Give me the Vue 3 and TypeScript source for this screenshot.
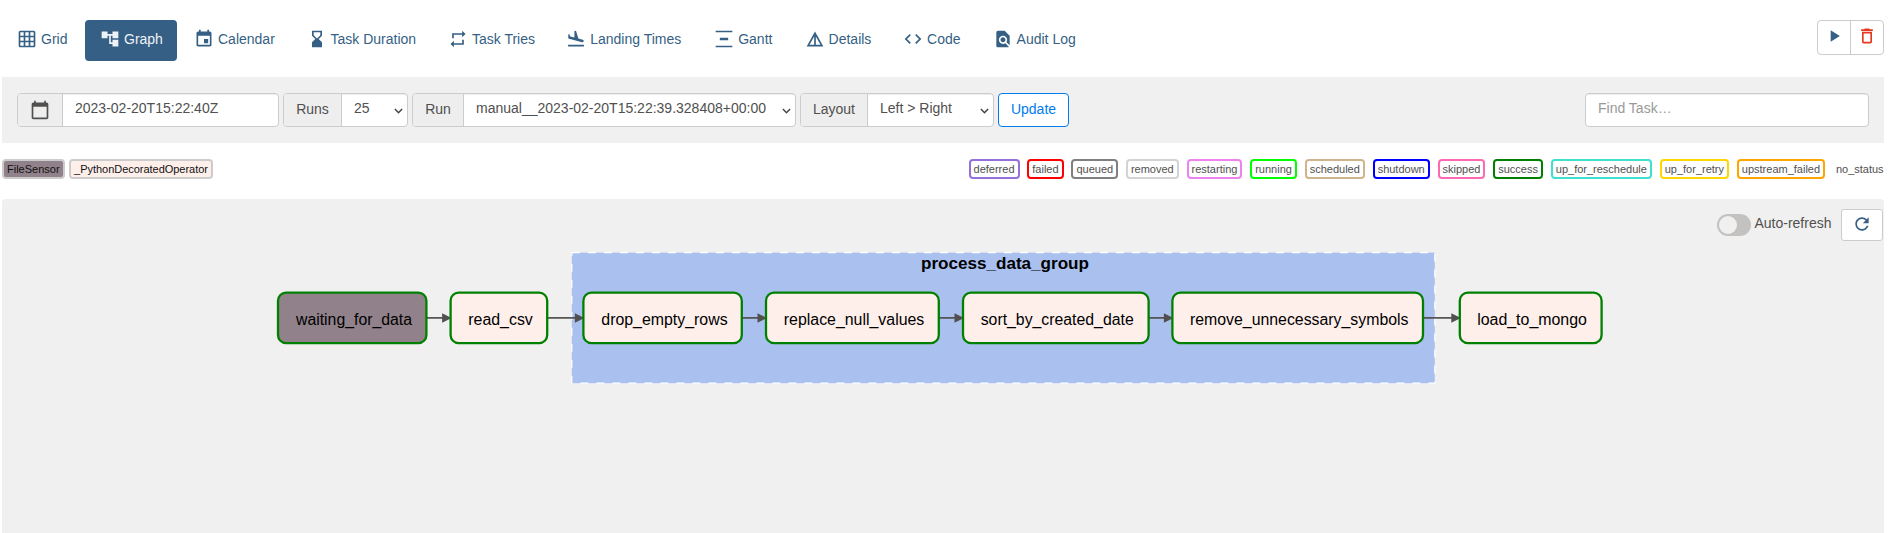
<script setup lang="ts">
interface Tab { name: string; width: number; icon: string; active?: boolean }
interface State { name: string; color: string }
interface TaskNode { name: string; x: number; w: number; tx: number; tw: number; sensor?: boolean }

const tabs: Tab[] = [
  { name: 'Grid', width: 81, icon: 'M20 2H4c-1.100 0-2 .9-2 2v16c0 1.100.9 2 2 2h16c1.100 0 2-.9 2-2V4c0-1.100-.9-2-2-2zM8 20H4v-4h4v4zm0-6H4v-4h4v4zm0-6H4V4h4v4zm6 12h-4v-4h4v4zm0-6h-4v-4h4v4zm0-6h-4V4h4v4zm6 12h-4v-4h4v4zm0-6h-4v-4h4v4zm0-6h-4V4h4v4z' },
  { name: 'Graph', width: 92, active: true, icon: 'M22 11V3h-7v3H9V3H2v8h7V8h2v10h4v3h7v-8h-7v3h-2V8h2v3z' },
  { name: 'Calendar', width: 110.5, icon: 'M17 12h-5v5h5v-5zM16 1v2H8V1H6v2H5c-1.110 0-1.990.9-1.990 2L3 19c0 1.100.89 2 2 2h14c1.100 0 2-.9 2-2V5c0-1.100-.9-2-2-2h-1V1h-2zm3 18H5V8h14v11z' },
  { name: 'Task Duration', width: 139.5, icon: 'M18 22l-.01-6L14 12l3.990-4.010L18 2H6v6l4 4-4 3.990V22h12zM8 7.500V4h8v3.500l-4 4-4-4z' },
  { name: 'Task Tries', width: 116.2, icon: 'M7 7h10v3l4-4-4-4v3H5v6h2V7zm10 10H7v-3l-4 4 4 4v-3h12v-6h-2v4z' },
  { name: 'Landing Times', width: 146, icon: 'M2.500 19h19v2h-19v-2zm16.840-3.150c.8.21 1.620-.26 1.840-1.060.21-.8-.26-1.620-1.060-1.840l-5.310-1.420-2.760-9.020L10.120 2v8.280L5.150 8.950l-.93-2.320-1.450-.39v5.170l16.570 4.440z' },
  { name: 'Gantt', width: 88.4, icon: 'M22 2v2H2V2h20zM7 10.500v3h10v-3H7zM2 20v2h20v-2H2z' },
  { name: 'Details', width: 96.5, icon: 'M12 3L2 21h20L12 3zm1 5.920L18.600 19H13V8.920zm-2 0V19H5.400L11 8.920z' },
  { name: 'Code', width: 87.5, icon: 'M9.400 16.600L4.800 12l4.600-4.600L8 6l-6 6 6 6 1.400-1.400zm5.200 0l4.600-4.600-4.600-4.600L16 6l6 6-6 6-1.400-1.400z' },
  { name: 'Audit Log', width: 112, icon: 'M14 2H6c-1.100 0-1.990.9-1.990 2L4 20c0 1.100.89 2 1.990 2H18c.45 0 .85-.15 1.190-.4l-4.430-4.430c-.8.520-1.740.83-2.760.83-2.760 0-5-2.240-5-5s2.240-5 5-5 5 2.240 5 5c0 1.020-.31 1.960-.83 2.750L20 19.580V8l-6-6zM9 13c0 1.660 1.340 3 3 3s3-1.340 3-3-1.340-3-3-3-3 1.340-3 3z' },
]

const states: State[] = [
  { name: 'deferred', color: 'mediumpurple' },
  { name: 'failed', color: 'red' },
  { name: 'queued', color: 'gray' },
  { name: 'removed', color: 'lightgrey' },
  { name: 'restarting', color: 'violet' },
  { name: 'running', color: 'lime' },
  { name: 'scheduled', color: 'tan' },
  { name: 'shutdown', color: 'blue' },
  { name: 'skipped', color: 'hotpink' },
  { name: 'success', color: 'green' },
  { name: 'up_for_reschedule', color: 'turquoise' },
  { name: 'up_for_retry', color: 'gold' },
  { name: 'upstream_failed', color: 'orange' },
]

const nodes: TaskNode[] = [
  { name: 'waiting_for_data', x: 276, w: 148.4, tx: 294, tw: 116, sensor: true },
  { name: 'read_csv', x: 448.6, w: 96.6, tx: 466.3, tw: 64.5 },
  { name: 'drop_empty_rows', x: 581.4, w: 158.4, tx: 599.3, tw: 126.3 },
  { name: 'replace_null_values', x: 764, w: 172.8, tx: 781.8, tw: 140.5 },
  { name: 'sort_by_created_date', x: 961, w: 185.6, tx: 978.7, tw: 153 },
  { name: 'remove_unnecessary_symbols', x: 1170.4, w: 250.6, tx: 1188, tw: 218.5 },
  { name: 'load_to_mongo', x: 1457.8, w: 141.8, tx: 1475.2, tw: 109.7 },
]
const edges = nodes.slice(1).map((n, i) => ({ from: nodes[i].x + nodes[i].w, to: n.x }))
</script>

<template>
  <div class="page">
    <header class="nav">
      <nav class="tabs">
        <a v-for="t in tabs" :key="t.name" class="tab" :class="{ active: t.active }" :style="{ width: t.width + 'px' }">
          <svg class="icon" viewBox="0 0 24 24"><path :d="t.icon" /></svg>
          <span>{{ t.name }}</span>
        </a>
      </nav>
      <div class="actions">
        <button class="act">
          <svg class="icon" viewBox="0 0 24 24"><path d="M8 5v14l11-7z" /></svg>
        </button>
        <button class="act danger">
          <svg class="icon" viewBox="0 0 24 24"><path d="M6 19c0 1.100.9 2 2 2h8c1.100 0 2-.9 2-2V7H6v12zM8 9h8v10H8V9zm7.500-5l-1-1h-5l-1 1H5v2h14V4z" /></svg>
        </button>
      </div>
    </header>

    <section class="filters">
      <div class="group date">
        <span class="addon">
          <svg class="icon" viewBox="0 0 24 24"><path d="M20 3h-1V1h-2v2H7V1H5v2H4c-1.100 0-2 .9-2 2v16c0 1.100.9 2 2 2h16c1.100 0 2-.9 2-2V5c0-1.100-.9-2-2-2zm0 18H4V8h16v13z" /></svg>
        </span>
        <span class="field">2023-02-20T15:22:40Z</span>
      </div>
      <div class="group runs">
        <span class="addon">Runs</span>
        <span class="field select">25<svg class="chev" viewBox="0 0 10 7"><path d="M1 1.200l4 4 4-4" /></svg></span>
      </div>
      <div class="group run">
        <span class="addon">Run</span>
        <span class="field select">manual__2023-02-20T15:22:39.328408+00:00<svg class="chev" viewBox="0 0 10 7"><path d="M1 1.200l4 4 4-4" /></svg></span>
      </div>
      <div class="group layout">
        <span class="addon">Layout</span>
        <span class="field select">Left &gt; Right<svg class="chev" viewBox="0 0 10 7"><path d="M1 1.200l4 4 4-4" /></svg></span>
      </div>
      <button class="update">Update</button>
      <div class="group search"><span class="field hint">Find Task…</span></div>
    </section>

    <section class="legend">
      <div class="operators">
        <span class="chip op sensor">FileSensor</span>
        <span class="chip op decorated">_PythonDecoratedOperator</span>
      </div>
      <div class="states">
        <span v-for="s in states" :key="s.name" class="chip" :style="{ borderColor: s.color }">{{ s.name }}</span>
        <span class="chip bare">no_status</span>
      </div>
    </section>

    <section class="panel">
      <div class="refresh">
        <span class="switch"></span>
        <span class="label">Auto-refresh</span>
        <button class="reload">
          <svg class="icon" viewBox="0 0 24 24"><path d="M17.650 6.350C16.200 4.900 14.210 4 12 4c-4.420 0-7.990 3.580-7.990 8s3.570 8 7.990 8c3.730 0 6.840-2.550 7.730-6h-2.080c-.82 2.330-3.040 4-5.650 4-3.310 0-6-2.690-6-6s2.690-6 6-6c1.660 0 3.140.69 4.220 1.780L13 11h7V4l-2.350 2.350z" /></svg>
        </button>
      </div>
      <svg class="graph" viewBox="0 0 1882 292" width="1882" height="292">
        <rect class="cluster" x="569.800" y="11.600" width="863" height="130.600" />
        <text class="title" x="919" y="28" textLength="168" lengthAdjust="spacingAndGlyphs">process_data_group</text>
        <g v-for="(e, i) in edges" :key="i" class="edge">
          <line :x1="e.from" y1="76.900" :x2="e.to - 7" y2="76.900" />
          <path :d="`M${e.to - 8.500} 72.200v9.600l9.500 -4.800z`" />
        </g>
        <g v-for="n in nodes" :key="n.name">
          <rect class="node" :class="{ sensor: n.sensor }" :x="n.x" y="51.700" :width="n.w" height="50.400" rx="8" />
          <text class="name" :x="n.tx" y="84" :textLength="n.tw" lengthAdjust="spacingAndGlyphs">{{ n.name }}</text>
        </g>
      </svg>
    </section>
  </div>
</template>

<style>
body { margin: 0; background: #fff; overflow: hidden; }
</style>

<style scoped>
.page { box-sizing: border-box; width: 1890px; height: 533px; padding: 20px 6px 0 2px; display: flex; flex-direction: column; overflow: hidden; font: 14px/20px "Liberation Sans", Arial, sans-serif; color: #51504f; }
.page * { box-sizing: border-box; }
button { font: inherit; margin: 0; }
.icon { width: 20px; height: 20px; fill: currentColor; flex: none; }
.nav { display: flex; justify-content: space-between; align-items: flex-start; height: 57px; flex: none; }
.tabs { display: flex; gap: 2px; }
.tab { display: flex; align-items: center; gap: 4px; height: 41px; padding-left: 15px; border-radius: 4px; color: #355f84; white-space: nowrap; }
.tab .icon { position: relative; top: -1.500px; }
.tab span { margin-top: -3px; }
.active { background: #355f84; color: #edf2f7; }
.actions { display: flex; height: 35px; width: 67px; border: 1px solid #ccc; border-radius: 4px; }
.act { flex: 1; padding: 0 0 3px; border: 0; background: none; color: #355f84; display: flex; align-items: center; justify-content: center; }
.danger { border-left: 1px solid #ccc; color: #e43921; }
.filters { display: flex; align-items: center; gap: 4px; height: 66px; flex: none; padding: 0 15px; background: #f0f0f0; }
.group { display: flex; height: 34px; border: 1px solid #ccc; border-radius: 4px; background: #fff; overflow: hidden; white-space: nowrap; }
.addon { display: flex; align-items: center; justify-content: center; background: #eee; border-right: 1px solid #ccc; flex: none; padding-bottom: 3px; }
.addon .icon { position: relative; top: 1px; }
.field { position: relative; flex: 1; padding: 4px 12px; box-shadow: inset 0 1px 1px rgba(0, 0, 0, .075); }
.chev { position: absolute; right: 4.500px; top: 13.500px; width: 9px; height: 6.300px; fill: none; stroke: #444; stroke-width: 1.700; }
.date { width: 262px; }
.date .addon { width: 45px; }
.runs { width: 125px; }
.runs .addon { width: 58px; }
.run { width: 384px; }
.run .addon { width: 51px; }
.layout { width: 194px; }
.layout .addon { width: 67px; }
.update { width: 71px; height: 34px; padding: 0 0 3px; border: 1px solid #017cee; border-radius: 4px; background: #fff; color: #017cee; }
.search { width: 284px; margin-left: auto; }
.hint { color: #999; }
.legend { display: flex; justify-content: space-between; height: 56px; flex: none; padding-top: 16px; font-size: 11px; line-height: 16px; }
.operators { display: flex; gap: 4.500px; }
.states { display: flex; gap: 7.800px; margin-right: -2.600px; }
.chip { height: 20px; padding: 0 3px; border: 2px solid #ccc; border-radius: 4px; white-space: nowrap; }
.bare { border: 0; padding: 2px 3px; }
.op { background: #ffefeb; color: #111; }
.op.sensor { background: #91818a; }
.decorated { width: 143.500px; letter-spacing: -0.030px; }
.panel { flex: 1; min-height: 0; background: #f0f0f0; border-radius: 4px 4px 0 0; padding-top: 10px; }
.refresh { display: flex; align-items: center; justify-content: flex-end; height: 32px; padding-right: 1px; }
.switch { width: 34px; height: 22px; border-radius: 11px; background: #c4c2c1; padding: 2px; margin-right: 3.500px; }
.switch::before { content: ""; display: block; width: 18px; height: 18px; border-radius: 50%; background: #f0f0f0; }
.label { margin-right: 9.500px; margin-top: -4px; }
.reload { width: 42px; height: 32px; padding: 0 0 3px; border: 1px solid #ccc; border-radius: 3px; background: #fff; color: #355f84; display: flex; align-items: center; justify-content: center; }
.graph { display: block; }
.cluster { fill: #aac1f0; stroke: #fff; stroke-width: 1.200; stroke-dasharray: 8 8; }
.title { font-size: 17px; font-weight: bold; fill: #000; }
.edge line { stroke: #51504f; stroke-width: 1.700; }
.edge path { fill: #51504f; }
.node { fill: #ffefeb; stroke: #008000; stroke-width: 2.300; }
.node.sensor { fill: #91818a; }
.name { font-size: 16px; fill: #000; }
</style>
